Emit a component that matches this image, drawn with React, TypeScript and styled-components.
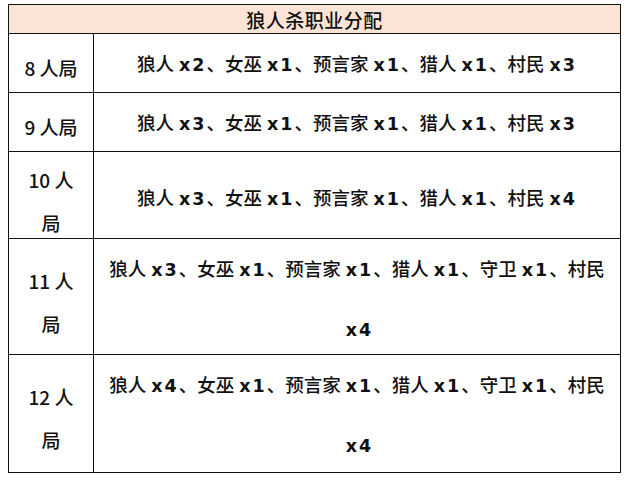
import { createGlobalStyle } from 'styled-components'
import styled from 'styled-components'

const GlobalStyle = createGlobalStyle`
  html, body {
    margin: 0;
    padding: 0;
    background: #ffffff;
  }
  body {
    font-family: "Noto Sans CJK SC", "Noto Sans", sans-serif;
    color: #111;
  }
`

const Page = styled.div`
  padding: 4px 9px 0 8px;
`

const Table = styled.div`
  width: 613px;
  border: 1.5px solid #111;
  box-sizing: border-box;
`

const TitleBar = styled.div`
  height: 28px;
  background-color: #fbe4d5;
  display: flex;
  align-items: center;
  justify-content: center;
  font-size: 19px;
  font-weight: 500;
  letter-spacing: 0.5px;
`

const Row = styled.div<{ $height: number }>`
  display: grid;
  grid-template-columns: 85px 1fr;
  height: ${p => p.$height}px;
  border-top: 1.5px solid #111;
`

const LabelCell = styled.div`
  display: flex;
  flex-direction: column;
  align-items: center;
  justify-content: center;
  border-right: 1.5px solid #111;
  font-size: 19px;
  font-weight: 500;
  line-height: 43px;
  padding-top: 6px;
`

const ContentCell = styled.div<{ $lineHeight: number }>`
  display: flex;
  flex-direction: column;
  align-items: center;
  justify-content: center;
  font-size: 18.5px;
  font-weight: 500;
  line-height: ${p => p.$lineHeight}px;
  white-space: nowrap;
`

const Count = styled.span`
  font-family: "DejaVu Sans", sans-serif;
  font-weight: 700;
  font-size: 17.5px;
  letter-spacing: 2px;
  margin: 0 0 0 5px;
`

type Part = [string, number | null]

const rows: { label: string[]; lines: Part[][]; height: number }[] = [
  {
    label: ['8 人局'],
    height: 58,
    lines: [[['狼人', 2], ['、女巫', 1], ['、预言家', 1], ['、猎人', 1], ['、村民', 3]]],
  },
  {
    label: ['9 人局'],
    height: 58,
    lines: [[['狼人', 3], ['、女巫', 1], ['、预言家', 1], ['、猎人', 1], ['、村民', 3]]],
  },
  {
    label: ['10 人', '局'],
    height: 86,
    lines: [[['狼人', 3], ['、女巫', 1], ['、预言家', 1], ['、猎人', 1], ['、村民', 4]]],
  },
  {
    label: ['11 人', '局'],
    height: 115,
    lines: [
      [['狼人', 3], ['、女巫', 1], ['、预言家', 1], ['、猎人', 1], ['、守卫', 1], ['、村民', null]],
      [['', 4]],
    ],
  },
  {
    label: ['12 人', '局'],
    height: 117,
    lines: [
      [['狼人', 4], ['、女巫', 1], ['、预言家', 1], ['、猎人', 1], ['、守卫', 1], ['、村民', null]],
      [['', 4]],
    ],
  },
]

const App = () => {
  return (
    <Page>
      <GlobalStyle />
      <Table>
        <TitleBar>狼人杀职业分配</TitleBar>
        {rows.map((row, i) => (
          <Row key={i} $height={row.height}>
            <LabelCell>
              {row.label.map((l, j) => (
                <div key={j}>{l}</div>
              ))}
            </LabelCell>
            <ContentCell $lineHeight={58}>
              {row.lines.map((line, j) => (
                <div key={j}>
                  {line.map(([name, n], k) => (
                    <span key={k}>
                      {name}
                      {n !== null && <Count>x{n}</Count>}
                    </span>
                  ))}
                </div>
              ))}
            </ContentCell>
          </Row>
        ))}
      </Table>
    </Page>
  )
}

export default App
